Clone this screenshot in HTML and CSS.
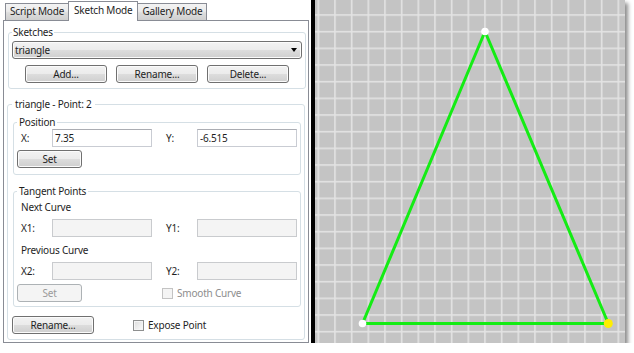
FILE: index.html
```html
<!DOCTYPE html>
<html lang="en">
<head>
    <meta charset="UTF-8">
    <title>Sketch Mode</title>
    <link rel="stylesheet" href="styles.css">
</head>
<body>
    <div class="window">
        <div class="side">
            <div class="tabs">
                <div class="tab">Script Mode</div>
                <div class="tab active">Sketch Mode</div>
                <div class="tab">Gallery Mode</div>
            </div>
            <div class="panel">
                <fieldset class="group sketches">
                    <legend>Sketches</legend>
                    <div class="combo"><span>triangle</span><span class="arrow"></span></div>
                    <div class="button-row">
                        <button class="button wide">Add...</button>
                        <button class="button wide">Rename...</button>
                        <button class="button wide">Delete...</button>
                    </div>
                </fieldset>
                <fieldset class="group point">
                    <legend>triangle - Point: 2</legend>
                    <fieldset class="group inner position">
                        <legend>Position</legend>
                        <div class="fields">
                            <div class="field"><label>X:</label><input class="textbox" value="7.35"></div>
                            <div class="field"><label>Y:</label><input class="textbox" value="-6.515"></div>
                        </div>
                        <button class="button small set">Set</button>
                    </fieldset>
                    <fieldset class="group inner tangent">
                        <legend>Tangent Points</legend>
                        <div class="caption first">Next Curve</div>
                        <div class="fields">
                            <div class="field"><label>X1:</label><input class="textbox" disabled></div>
                            <div class="field"><label>Y1:</label><input class="textbox" disabled></div>
                        </div>
                        <div class="caption">Previous Curve</div>
                        <div class="fields">
                            <div class="field"><label>X2:</label><input class="textbox" disabled></div>
                            <div class="field"><label>Y2:</label><input class="textbox" disabled></div>
                        </div>
                        <div class="action-row">
                            <button class="button small" disabled>Set</button>
                            <label class="check smooth disabled"><input type="checkbox" disabled>Smooth Curve</label>
                        </div>
                    </fieldset>
                    <div class="action-row footer">
                        <button class="button wide">Rename...</button>
                        <label class="check expose"><input type="checkbox">Expose Point</label>
                    </div>
                </fieldset>
            </div>
        </div>
        <div class="canvas">
            <svg width="310" height="343" viewBox="0 0 310 343">
                <defs>
                    <pattern id="grid" x="2.5" y="14.2" width="16.667" height="16.667" patternUnits="userSpaceOnUse">
                        <rect x="0" y="0" width="1.6" height="16.667" fill="#e3e3e3"/>
                        <rect x="0" y="0" width="16.667" height="1.6" fill="#e3e3e3"/>
                    </pattern>
                </defs>
                <rect width="310" height="343" fill="url(#grid)"/>
                <polygon points="170,31.5 47.5,323.5 293.3,323.5" fill="none" stroke="#14ec14" stroke-width="3" stroke-linejoin="round"/>
                <circle cx="170" cy="31.5" r="3.8" fill="#fff"/>
                <circle cx="47.5" cy="323.5" r="3.8" fill="#fff"/>
                <circle cx="293.3" cy="323.5" r="4.5" fill="#ffee00"/>
            </svg>
        </div>
    </div>
</body>
</html>
```

FILE: styles.css
```css
body {
    margin: 0;
    background-color: #ffffff;
    font-family: 'Noto Sans', 'Open Sans', sans-serif;
    font-size: 10px;
    letter-spacing: -0.2px;
    color: #1e1e1e;
}

.window {
    display: flex;
    width: 625px;
    height: 343px;
    box-shadow: 3px 3px 4px rgba(0, 0, 0, 0.45);
}

.side {
    width: 311px;
    box-sizing: border-box;
    padding: 0 2px 0 3px;
    display: flex;
    flex-direction: column;
}

.tabs {
    display: flex;
    align-items: flex-end;
    height: 20px;
    padding-left: 2px;
}

.tab {
    height: 17px;
    box-sizing: border-box;
    line-height: 15px;
    padding: 0 4px;
    border: 1px solid #898c95;
    border-bottom: none;
    background: linear-gradient(#f3f3f3, #ebebeb 45%, #dddddd 55%, #cfcfcf);
    white-space: nowrap;
}

.tab + .tab {
    margin-left: -1px;
}

.tab.active {
    height: 20px;
    margin-bottom: -1px;
    padding: 0 5px;
    line-height: 17px;
    background: #ffffff;
    position: relative;
    z-index: 1;
}

.panel {
    flex: 1;
    border: 1px solid #898c95;
    background-color: #ffffff;
    padding: 4px 2px 0 4px;
}

.group {
    margin: 0;
    min-width: 0;
    border: 1px solid #d5dfe5;
    border-radius: 3px;
}

.group legend {
    padding: 0 1px;
    line-height: 14px;
}

.sketches {
    padding: 2px 3px 5px;
}

.combo {
    display: flex;
    align-items: center;
    height: 18px;
    box-sizing: border-box;
    padding-left: 2px;
    border: 1px solid #707070;
    border-radius: 3px;
    background: linear-gradient(#f2f2f2, #ebebeb 50%, #dddddd 50%, #cfcfcf);
    box-shadow: inset 0 0 0 1px #fbfbfb;
}

.arrow {
    margin-left: auto;
    margin-right: 4px;
    border-left: 3.5px solid transparent;
    border-right: 3.5px solid transparent;
    border-top: 4px solid #000000;
}

.button-row {
    display: flex;
    justify-content: center;
    gap: 9px;
    margin-top: 6px;
}

.button {
    height: 18px;
    padding: 0;
    border: 1px solid #707070;
    border-radius: 3px;
    background: linear-gradient(#f2f2f2, #ebebeb 50%, #dddddd 50%, #cfcfcf);
    box-shadow: inset 0 0 0 1px #fbfbfb;
    font: inherit;
    letter-spacing: inherit;
    color: #1e1e1e;
}

.button:disabled {
    border-color: #adb2b5;
    background: #f4f4f4;
    box-shadow: none;
    color: #9a9a9a;
}

.wide {
    width: 82px;
}

.small {
    width: 65px;
}

.point {
    margin: 8px 1px 0 -1px;
    padding: 4px 2px 5px 4px;
}

.point > legend {
    padding: 0 3px;
}

.inner {
    margin: 0 1px;
    padding: 0 3px 6px;
}

.inner legend {
    padding: 0 2px;
}

.tangent {
    margin-top: 9px;
    padding-bottom: 4px;
}

.fields {
    display: flex;
    gap: 10px;
}

.field {
    display: flex;
    align-items: center;
}

.field label {
    width: 35px;
    box-sizing: border-box;
    padding-left: 4px;
}

.textbox {
    width: 100px;
    height: 18px;
    box-sizing: border-box;
    margin: 0;
    padding: 0 2px;
    border: 1px solid #c9ccd3;
    border-top-color: #abadb3;
    background-color: #ffffff;
    font: inherit;
    letter-spacing: inherit;
    color: #1e1e1e;
    outline: none;
}

.textbox:disabled {
    background-color: #f4f4f4;
    border-color: #c9cbce;
}

.set {
    display: block;
    margin-top: 3px;
}

.caption {
    line-height: 14px;
    padding-left: 4px;
    margin: 6px 0 5px;
}

.caption.first {
    margin-top: 2px;
}

.action-row {
    display: flex;
    align-items: center;
    margin-top: 4px;
}

.footer {
    margin-top: 9px;
}

.check {
    display: flex;
    align-items: center;
    gap: 4px;
}

.check input {
    appearance: none;
    width: 11px;
    height: 11px;
    margin: 0;
    border: 1px solid #8e8f8f;
    background: linear-gradient(135deg, #dcdcdc, #fbfbfb);
    box-shadow: inset 0 0 0 1px #f4f4f4;
}

.check.disabled {
    color: #8d8d8d;
}

.check.disabled input {
    border-color: #c3c3c3;
    background: #f4f4f4;
}

.smooth {
    margin-left: 80px;
}

.expose {
    margin-left: 39px;
}

.canvas {
    width: 310px;
    border-left: 4px solid #000000;
    background-color: #c4c4c4;
}

.canvas svg {
    display: block;
}
```
